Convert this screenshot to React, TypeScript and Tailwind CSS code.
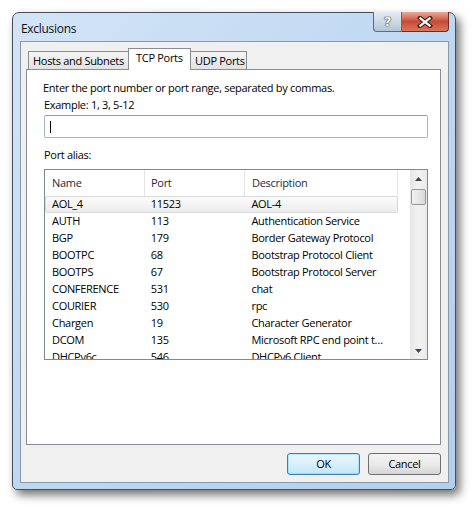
const PORTS = [
    { name: "AOL_4", port: "11523", desc: "AOL-4" },
    { name: "AUTH", port: "113", desc: "Authentication Service" },
    { name: "BGP", port: "179", desc: "Border Gateway Protocol" },
    { name: "BOOTPC", port: "68", desc: "Bootstrap Protocol Client" },
    { name: "BOOTPS", port: "67", desc: "Bootstrap Protocol Server" },
    { name: "CONFERENCE", port: "531", desc: "chat" },
    { name: "COURIER", port: "530", desc: "rpc" },
    { name: "Chargen", port: "19", desc: "Character Generator" },
    { name: "DCOM", port: "135", desc: "Microsoft RPC end point t…" },
    { name: "DHCPv6c", port: "546", desc: "DHCPv6 Client" },
];

const font = "font-['Open_Sans',sans-serif] text-[11px] tracking-[-0.3px]";

function TitleButtons() {
    return (
        <div className="-mt-px flex h-[20px] self-start">
            <div className="flex w-[29px] items-center justify-center rounded-bl-[4px] border border-t-0 border-[#5d6b7c] bg-gradient-to-b from-[#e4ecf5] via-[#cdd9e6] to-[#b4c5d8]">
                <span className="font-['DejaVu_Sans',sans-serif] text-[13px] font-bold leading-none text-white [text-shadow:0_0_1px_#2b3440,0_0_1px_#2b3440,0_0_1px_#2b3440]">?</span>
            </div>
            <div className="flex w-[47px] items-center justify-center rounded-br-[4px] border border-l-0 border-t-0 border-[#6e2a20] bg-gradient-to-b from-[#e9a99a] via-[#c74a33] to-[#d8775f]">
                <svg width="16" height="12" viewBox="0 0 16 12">
                    <path d="M3 2 L13 10 M13 2 L3 10" stroke="#3b1d18" strokeWidth="4.2" strokeLinecap="square" />
                    <path d="M3.4 2.4 L12.6 9.6 M12.6 2.4 L3.4 9.6" stroke="#ffffff" strokeWidth="2.2" strokeLinecap="square" />
                </svg>
            </div>
        </div>
    );
}

function Tabs() {
    return (
        <div className="ml-[2px] flex h-[21px] items-end">
            <div className="flex h-[18px] w-[101px] items-center border border-b-0 border-[#898c95] bg-gradient-to-b from-[#f4f4f4] to-[#e2e2e2] pl-[4px] pt-[1px]">
                Hosts and Subnets
            </div>
            <div className="relative z-10 -mb-px -ml-px flex h-[22px] w-[63px] items-center border border-b-0 border-[#898c95] bg-white pb-[3px] pl-[7px]">
                TCP Ports
            </div>
            <div className="-ml-px flex h-[18px] w-[57px] items-center border border-b-0 border-l-0 border-[#898c95] bg-gradient-to-b from-[#f4f4f4] to-[#e2e2e2] pl-[5px] pt-[1px]">
                UDP Ports
            </div>
        </div>
    );
}

function Arrow({ down }: { down?: boolean }) {
    return (
        <div className="flex h-[17px] items-center justify-center">
            <svg width="7" height="4" viewBox="0 0 7 4">
                <path d={down ? "M0 0 H7 L3.5 4 Z" : "M0 4 H7 L3.5 0 Z"} fill="#3d4450" />
            </svg>
        </div>
    );
}

function PortList() {
    return (
        <div className="flex h-[191px] border border-[#828790] bg-white">
            <div className="flex flex-1 flex-col overflow-hidden">
                <div className="flex h-[26px] shrink-0 text-[#1e2b3c]">
                    <div className="flex w-[100px] items-center border-r border-[#e3e5e8] pl-[7px]">Name</div>
                    <div className="flex w-[100px] items-center border-r border-[#e3e5e8] pl-[6px]">Port</div>
                    <div className="flex w-[153px] items-center border-r border-[#e3e5e8] pl-[7px]">Description</div>
                    <div className="flex-1" />
                </div>
                {PORTS.map((p, i) => (
                    <div
                        key={p.name}
                        className={`flex h-[17px] w-[353px] shrink-0 items-center whitespace-nowrap ${
                            i === 0 ? "rounded-[2px] border border-[#d9d9d9] bg-gradient-to-b from-[#fbfbfb] to-[#ececec]" : "border border-transparent"
                        }`}
                    >
                        <div className="w-[100px] pl-[6px]">{p.name}</div>
                        <div className="w-[100px] pl-[5px]">{p.port}</div>
                        <div className="w-[152px] overflow-hidden pl-[6px]">{p.desc}</div>
                    </div>
                ))}
            </div>
            <div className="flex w-[17px] flex-col bg-gradient-to-r from-[#e7e7e7] via-[#f2f2f2] to-[#e9e9e9]">
                <Arrow />
                <div className="mx-[1px] mt-[2px] h-[16px] rounded-[2px] border border-[#989898] bg-gradient-to-r from-[#f2f2f2] to-[#d9d9d9]" />
                <div className="flex-1" />
                <Arrow down />
            </div>
        </div>
    );
}

export default function App() {
    return (
        <div className={`h-[510px] w-[476px] bg-white pl-[12px] pt-[12px] text-black ${font}`}>
            <div className="flex h-[478px] w-[444px] flex-col rounded-b-[5px] rounded-t-[7px] border border-[#46505c] bg-gradient-to-br from-[#d3e4f6] via-[#bfd8f2] to-[#b2cfee] pb-[6px] pl-[7px] pr-[6px] shadow-[4px_5px_10px_rgba(0,0,0,0.55)]">
                <div className="flex h-[28px] shrink-0 justify-between">
                    <span className="ml-[1px] mt-[7px] text-[12px] text-[#111]">Exclusions</span>
                    <TitleButtons />
                </div>
                <div className="flex flex-1 flex-col border border-[#8a98a8] bg-[#f0f0f0] pb-[7px] pl-[5px] pr-[7px] pt-[6px]">
                    <Tabs />
                    <div className="flex h-[376px] flex-col border border-[#898c95] bg-white pl-[16px] pr-[12px] pt-[10px]">
                        <p className="h-[17px] leading-[16px]">Enter the port number or port range, separated by commas.</p>
                        <p className="ml-[1px] h-[17px] leading-[16px]">Example: 1, 3, 5-12</p>
                        <div className="ml-[1px] mt-[1px] flex h-[23px] items-center rounded-[2px] border border-[#a5b4c6] border-t-[#8d9db2] bg-white pl-[5px]">
                            <div className="h-[12px] w-px bg-black" />
                        </div>
                        <p className="ml-[1px] mt-[9px] h-[17px] leading-[16px]">Port alias:</p>
                        <div className="ml-[1px] mt-[5px]">
                            <PortList />
                        </div>
                    </div>
                    <div className="mt-[8px] flex justify-end gap-[8px]">
                        <button className="h-[22px] w-[73px] rounded-[3px] border border-[#3c7fb1] bg-gradient-to-b from-[#eaf6fd] via-[#d9f0fc] to-[#bee6fd] shadow-[inset_0_0_0_1px_#48d0fb55]">
                            OK
                        </button>
                        <button className="h-[22px] w-[73px] rounded-[3px] border border-[#707070] bg-gradient-to-b from-[#f2f2f2] via-[#ebebeb] to-[#d5d5d5]">
                            Cancel
                        </button>
                    </div>
                </div>
            </div>
        </div>
    );
}
